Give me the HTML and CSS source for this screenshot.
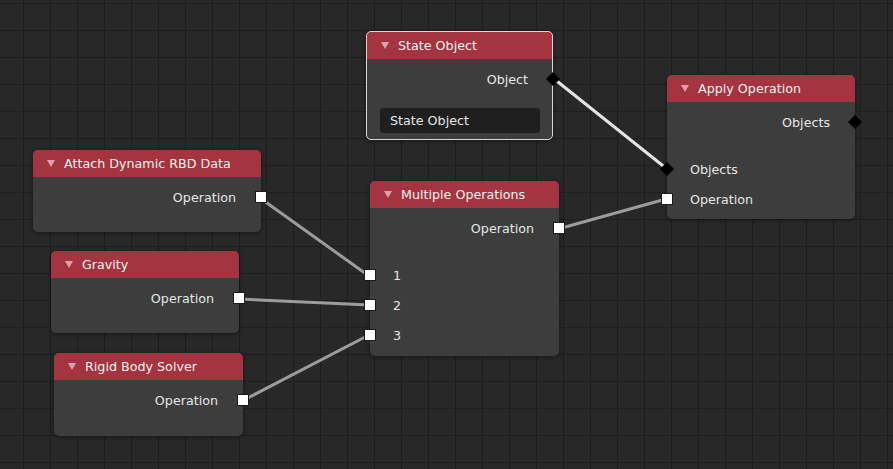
FILE: index.html
```html
<!DOCTYPE html>
<html lang="en">
<head>
    <meta charset="UTF-8">
    <meta name="viewport" content="width=device-width, initial-scale=1.0">
    <title>Node Editor</title>
    <link rel="stylesheet" href="styles.css">
</head>
<body>
    <div class="editor">
        <!-- links between sockets -->
        <svg class="links" width="893" height="469" viewBox="0 0 893 469">
            <g class="link">
                <line x1="260" y1="198" x2="369" y2="276"/>
                <line x1="239" y1="299" x2="369" y2="305"/>
                <line x1="242" y1="401" x2="369" y2="335"/>
                <line x1="558" y1="229" x2="666" y2="199"/>
            </g>
            <g class="link active">
                <line x1="553" y1="78" x2="667" y2="169"/>
            </g>
        </svg>

        <!-- State Object -->
        <div class="node node-state selected">
            <div class="node-header"><span class="arrow"></span>State Object</div>
            <div class="node-body">
                <div class="row out">Object<span class="socket diamond"></span></div>
                <div class="field">State Object</div>
            </div>
        </div>

        <!-- Apply Operation -->
        <div class="node node-apply">
            <div class="node-header"><span class="arrow"></span>Apply Operation</div>
            <div class="node-body">
                <div class="row out">Objects<span class="socket diamond"></span></div>
                <div class="spacer"></div>
                <div class="row in"><span class="socket diamond"></span>Objects</div>
                <div class="row in"><span class="socket square"></span>Operation</div>
            </div>
        </div>

        <!-- Attach Dynamic RBD Data -->
        <div class="node node-attach">
            <div class="node-header"><span class="arrow"></span>Attach Dynamic RBD Data</div>
            <div class="node-body">
                <div class="row out">Operation<span class="socket square"></span></div>
            </div>
        </div>

        <!-- Multiple Operations -->
        <div class="node node-multi">
            <div class="node-header"><span class="arrow"></span>Multiple Operations</div>
            <div class="node-body">
                <div class="row out">Operation<span class="socket square"></span></div>
                <div class="spacer"></div>
                <div class="row in"><span class="socket square"></span>1</div>
                <div class="row in"><span class="socket square"></span>2</div>
                <div class="row in"><span class="socket square"></span>3</div>
            </div>
        </div>

        <!-- Gravity -->
        <div class="node node-gravity">
            <div class="node-header"><span class="arrow"></span>Gravity</div>
            <div class="node-body">
                <div class="row out">Operation<span class="socket square"></span></div>
            </div>
        </div>

        <!-- Rigid Body Solver -->
        <div class="node node-solver">
            <div class="node-header"><span class="arrow"></span>Rigid Body Solver</div>
            <div class="node-body">
                <div class="row out">Operation<span class="socket square"></span></div>
            </div>
        </div>
    </div>
</body>
</html>
```

FILE: styles.css
```css
* {
    margin: 0;
    padding: 0;
    box-sizing: border-box;
}

body {
    font-family: 'DejaVu Sans', 'Liberation Sans', sans-serif;
    font-size: 12.7px;
    background: #282828;
    color: #e6e6e6;
    overflow: hidden;
}

/* 网格画布 */
.editor {
    position: relative;
    width: 893px;
    height: 469px;
    background-color: #282828;
    background-image:
        linear-gradient(to right, #1d1d1d 1px, transparent 1px),
        linear-gradient(to bottom, #1d1d1d 1px, transparent 1px);
    background-size: 27px 27px;
    background-position: 23px 3px;
}

.links {
    position: absolute;
    top: 0;
    left: 0;
}

.link line {
    stroke: #9c9c9c;
    stroke-width: 3;
    stroke-linecap: round;
}

.link.active line {
    stroke: #e4e4e4;
}

/* 节点 */
.node {
    position: absolute;
    background: #3d3d3d;
    border-radius: 5px;
    box-shadow: 0 1px 4px rgba(0, 0, 0, 0.45);
}

.node.selected {
    outline: 1px solid #d8d8d8;
    outline-offset: -1px;
}

.node-header {
    height: 27px;
    display: flex;
    align-items: center;
    padding-left: 14px;
    background: #a4343f;
    border-radius: 5px 5px 0 0;
    color: #f0f0f0;
    white-space: nowrap;
}

.node.selected .node-header {
    margin: 1px 1px 0;
    border-radius: 4px 4px 0 0;
}

.arrow {
    width: 0;
    height: 0;
    border-left: 4px solid transparent;
    border-right: 4px solid transparent;
    border-top: 7px solid #dba2a9;
    margin-right: 9px;
}

.node-body {
    display: flex;
    flex-direction: column;
    padding-top: 5px;
}

.row {
    position: relative;
    height: 30px;
    display: flex;
    align-items: center;
    white-space: nowrap;
}

.row.out {
    justify-content: flex-end;
    padding-right: 25px;
}

.row.in {
    padding-left: 23px;
}

.spacer {
    height: 17px;
}

/* 插口 */
.socket {
    position: absolute;
    top: 50%;
}

.socket.square {
    width: 12px;
    height: 12px;
    background: #ffffff;
    border: 1px solid #1a1a1a;
    margin-top: -6px;
}

.socket.diamond {
    width: 10px;
    height: 10px;
    background: #000000;
    transform: rotate(45deg);
    margin-top: -5px;
}

.row.out .socket.square { right: -6px; }
.row.in .socket.square { left: -6px; }
.row.out .socket.diamond { right: -5px; }
.row.in .socket.diamond { left: -5px; }

.field {
    margin: 14px 13px 0 14px;
    height: 25px;
    background: #1f1f1f;
    border-radius: 3px;
    display: flex;
    align-items: center;
    padding-left: 10px;
}

/* 节点位置 */
.node-state { left: 366px; top: 31px; width: 187px; height: 109px; }
.node-apply { left: 667px; top: 75px; width: 188px; height: 144px; }
.node-attach { left: 33px; top: 150px; width: 228px; height: 82px; }
.node-multi { left: 370px; top: 181px; width: 189px; height: 175px; }
.node-gravity { left: 51px; top: 251px; width: 188px; height: 82px; }
.node-solver { left: 54px; top: 353px; width: 189px; height: 83px; }
```
